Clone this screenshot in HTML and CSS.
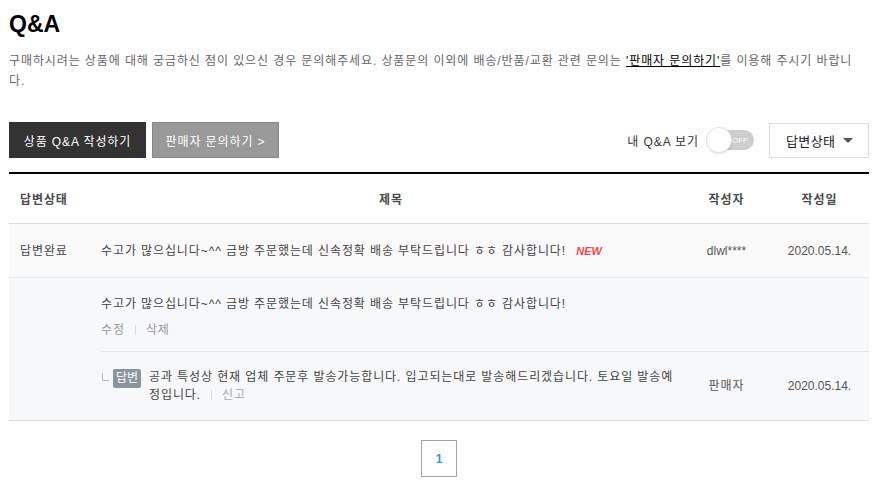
FILE: index.html
```html
<!DOCTYPE html>
<html lang="ko">
<head>
    <meta charset="UTF-8">
    <title>Q&amp;A</title>
    <link rel="stylesheet" href="styles.css">
</head>
<body>
<div class="qna">
    <h2 class="qna-title">Q&amp;A</h2>
    <p class="qna-desc">구매하시려는 상품에 대해 궁금하신 점이 있으신 경우 문의해주세요. 상품문의 이외에 배송/반품/교환 관련 문의는 <a href="#">'판매자 문의하기'</a>를 이용해 주시기 바랍니다.</p>

    <div class="qna-toolbar">
        <div class="btn-group">
            <a href="#" class="btn btn-dark">상품 Q&amp;A 작성하기</a>
            <a href="#" class="btn btn-gray">판매자 문의하기 &gt;</a>
        </div>
        <div class="filters">
            <span class="my-qna">내 Q&amp;A 보기</span>
            <span class="toggle">
                <span class="toggle-knob"></span>
                <span class="toggle-text">OFF</span>
            </span>
            <div class="select">답변상태 <span class="caret"></span></div>
        </div>
    </div>

    <div class="qna-table">
        <div class="qna-row qna-head">
            <div class="col-state">답변상태</div>
            <div class="col-title">제목</div>
            <div class="col-writer">작성자</div>
            <div class="col-date">작성일</div>
        </div>

        <div class="qna-row qna-item">
            <div class="col-state">답변완료</div>
            <div class="col-title">수고가 많으십니다~^^ 금방 주문했는데 신속정확 배송 부탁드립니다 ㅎㅎ 감사합니다! <span class="new">NEW</span></div>
            <div class="col-writer latin">dlwl****</div>
            <div class="col-date latin">2020.05.14.</div>
        </div>

        <div class="qna-detail">
            <div class="detail-q">
                <p>수고가 많으십니다~^^ 금방 주문했는데 신속정확 배송 부탁드립니다 ㅎㅎ 감사합니다!</p>
                <div class="detail-links">
                    <a href="#">수정</a><span class="bar"></span><a href="#">삭제</a>
                </div>
            </div>
            <div class="detail-a">
                <div class="answer">
                    <span class="reply-mark"></span>
                    <span class="badge">답변</span>
                    <p>공과 특성상 현재 업체 주문후 발송가능합니다. 입고되는대로 발송해드리겠습니다. 토요일 발송예정입니다.<span class="bar"></span><a href="#">신고</a></p>
                </div>
                <div class="col-writer">판매자</div>
                <div class="col-date latin">2020.05.14.</div>
            </div>
        </div>
    </div>

    <div class="paging">
        <a href="#" class="page on">1</a>
    </div>
</div>
</body>
</html>
```

FILE: styles.css
```css
* {
    box-sizing: border-box;
}

body {
    margin: 0;
    font-family: "Liberation Sans", "Noto Sans CJK KR", sans-serif;
    font-size: 12px;
    letter-spacing: 0.9px;
    color: #333;
    background: #fff;
}

a {
    color: inherit;
    text-decoration: none;
}

p {
    margin: 0;
}

.latin {
    letter-spacing: 0;
}

.qna {
    padding: 0 8px 0 9px;
}

.qna-title {
    margin: 10px 0 0;
    font-size: 23px;
    line-height: 28px;
    font-weight: bold;
    letter-spacing: 0;
    color: #000;
}

.qna-desc {
    margin-top: 13px;
    padding-right: 10px;
    line-height: 20px;
    color: #666;
}

.qna-desc a {
    color: #000;
    text-decoration: underline;
}

/* toolbar */
.qna-toolbar {
    display: flex;
    justify-content: space-between;
    align-items: center;
    margin-top: 31px;
}

.btn-group {
    display: flex;
    gap: 6px;
}

.btn {
    display: flex;
    align-items: center;
    justify-content: center;
    height: 36px;
    color: #fff;
}

.btn-dark {
    width: 137px;
    background: #333;
}

.btn-gray {
    width: 127px;
    background: #999;
    border: 1px solid #888;
}

.filters {
    display: flex;
    align-items: center;
}

.my-qna {
    color: #333;
    margin-right: 8px;
}

.toggle {
    position: relative;
    display: flex;
    align-items: center;
    justify-content: flex-end;
    width: 47px;
    height: 20px;
    padding-right: 6px;
    border-radius: 10px;
    background: #cdcdcd;
}

.toggle-knob {
    position: absolute;
    left: -1px;
    top: -3px;
    width: 26px;
    height: 26px;
    border-radius: 50%;
    background: #fff;
    border: 1px solid #e2e2e2;
    box-shadow: 0 1px 2px rgba(0, 0, 0, 0.12);
}

.toggle-text {
    font-size: 8px;
    letter-spacing: 0;
    color: #fff;
}

.select {
    display: flex;
    align-items: center;
    justify-content: space-between;
    width: 100px;
    height: 35px;
    margin-left: 15px;
    padding: 0 15px 0 16px;
    border: 1px solid #ddd;
    font-size: 13px;
    letter-spacing: 0.4px;
    color: #222;
}

.caret {
    width: 0;
    height: 0;
    border-left: 5px solid transparent;
    border-right: 5px solid transparent;
    border-top: 5px solid #555;
}

/* table */
.qna-table {
    margin-top: 14px;
    border-top: 2px solid #000;
}

.qna-row {
    display: grid;
    grid-template-columns: 90px 1fr 87px 99px;
}

.col-state {
    padding-left: 11px;
}

.col-writer,
.col-date {
    text-align: center;
    color: #555;
}

.qna-head {
    height: 50px;
    align-items: center;
    border-bottom: 1px solid #ddd;
    font-weight: bold;
    color: #4a4a4a;
}

.qna-head .col-title {
    text-align: center;
}

.qna-head .col-writer,
.qna-head .col-date {
    color: #4a4a4a;
}

.qna-item {
    padding: 18px 0 17px;
    line-height: 18px;
    background: #fafafa;
    border-bottom: 1px solid #eaeaea;
    color: #444;
}

.qna-item .col-title {
    padding-left: 2px;
}

.new {
    margin-left: 6px;
    font-size: 11px;
    font-weight: bold;
    font-style: italic;
    letter-spacing: 0;
    color: #f2474e;
}

.qna-detail {
    padding-left: 92px;
    background: #f7f8fa;
    border-bottom: 1px solid #ddd;
    color: #444;
    line-height: 18px;
}

.detail-q {
    padding: 17px 0 12px;
    border-bottom: 1px solid #e6e7e9;
}

.detail-links {
    display: flex;
    align-items: center;
    margin-top: 8px;
    color: #999;
}

.bar {
    display: inline-block;
    width: 1px;
    height: 10px;
    margin: 0 10px;
    background: #ddd;
    vertical-align: -1px;
}

.detail-a {
    display: grid;
    grid-template-columns: 1fr 87px 99px;
    align-items: center;
    padding: 16px 0;
}

.answer {
    display: flex;
    align-items: flex-start;
    padding-right: 8px;
}

.reply-mark {
    flex: none;
    width: 7px;
    height: 8px;
    margin: 5px 4px 0 1px;
    border-left: 1px solid #bbb;
    border-bottom: 1px solid #bbb;
}

.badge {
    flex: none;
    width: 28px;
    height: 19px;
    margin: 1px 8px 0 0;
    border-radius: 2px;
    background: #8e949c;
    color: #fff;
    text-align: center;
    line-height: 19px;
    letter-spacing: 0;
}

.answer a {
    color: #aaa;
}

/* paging */
.paging {
    display: flex;
    justify-content: center;
    margin-top: 19px;
}

.page {
    display: flex;
    align-items: center;
    justify-content: center;
    width: 36px;
    height: 37px;
    border: 1px solid #a3a3a3;
    font-weight: bold;
    letter-spacing: 0;
    color: #2a9fd8;
}
```
